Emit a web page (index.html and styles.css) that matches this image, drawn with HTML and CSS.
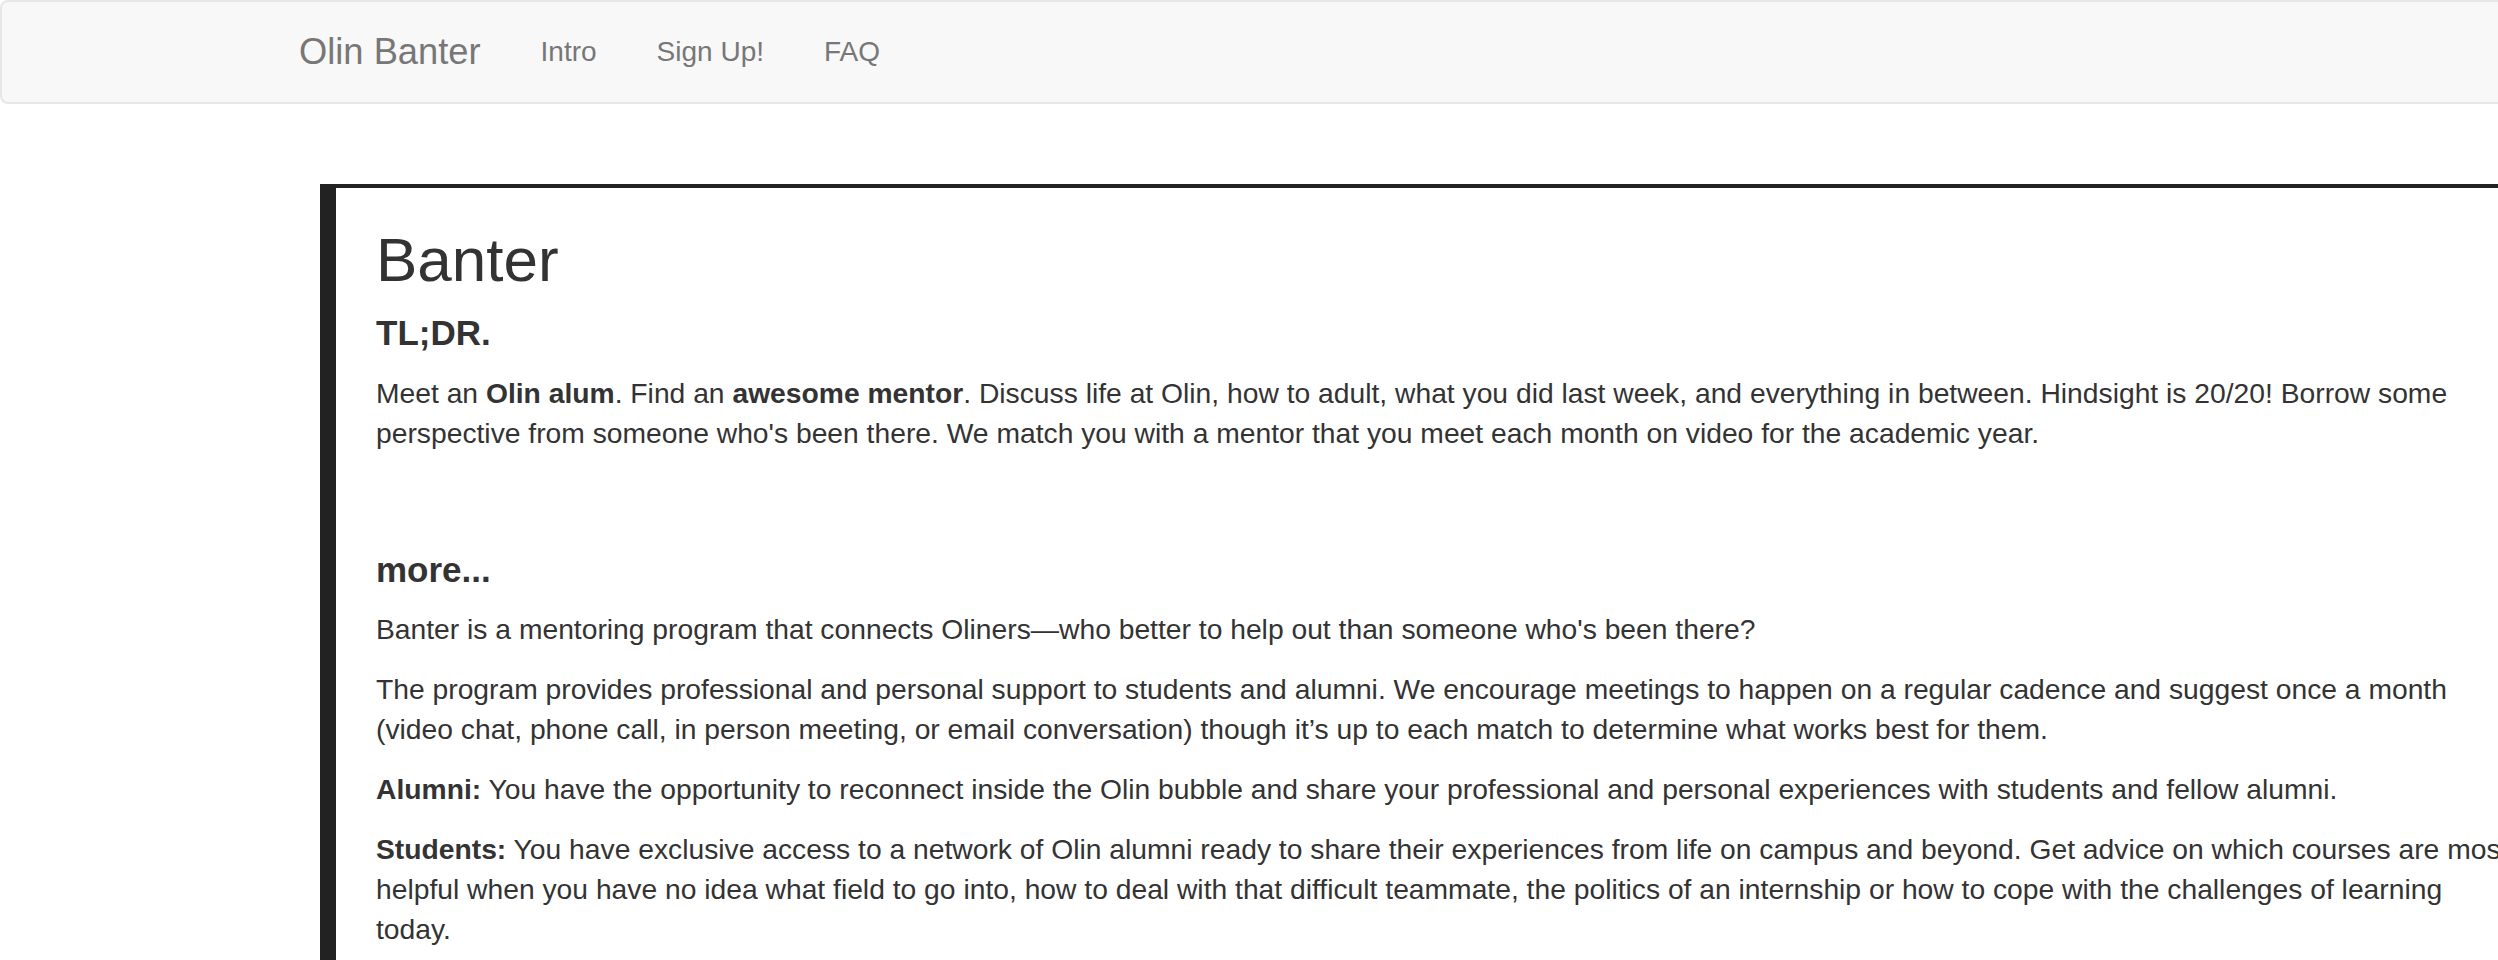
FILE: index.html
```html
<!DOCTYPE html>
<html lang="en">
<head>
<meta charset="utf-8">
<title>Olin Banter</title>
<link rel="stylesheet" href="styles.css">
</head>
<body>
<nav class="navbar">
  <div class="nav-inner">
    <a class="brand" href="#">Olin Banter</a>
    <ul class="nav-links">
      <li><a href="#">Intro</a></li>
      <li><a href="#">Sign Up!</a></li>
      <li><a href="#">FAQ</a></li>
    </ul>
  </div>
</nav>
<main class="intro">
  <h1 class="title">Banter</h1>
  <h4 class="sub">TL;DR.</h4>
  <p>Meet an <strong>Olin alum</strong>. Find an <strong>awesome mentor</strong>. Discuss life at Olin, how to adult, what you did last week, and everything in between. Hindsight is 20/20! Borrow some perspective from someone who's been there. We match you with a mentor that you meet each month on video for the academic year.</p>
  <br>
  <h4 class="sub more">more...</h4>
  <p>Banter is a mentoring program that connects Oliners—who better to help out than someone who's been there?</p>
  <p>The program provides professional and personal support to students and alumni. We encourage meetings to happen on a regular cadence and suggest once a month (video chat, phone call, in person meeting, or email conversation) though it’s up to each match to determine what works best for them.</p>
  <p><strong>Alumni:</strong> You have the opportunity to reconnect inside the Olin bubble and share your professional and personal experiences with students and fellow alumni.</p>
  <p><strong>Students:</strong> You have exclusive access to a network of Olin alumni ready to share their experiences from life on campus and beyond. Get advice on which courses are most helpful when you have no idea what field to go into, how to deal with that difficult teammate, the politics of an internship or how to cope with the challenges of learning today.</p>
</main>
</body>
</html>
```
FILE: styles.css
```css
html, body {
  margin: 0;
  padding: 0;
  overflow: hidden;
}
body {
  font-family: "Liberation Sans", Arial, Helvetica, sans-serif;
  font-size: 28.25px;
  line-height: 40px;
  color: #333;
  background: #fff;
}
.navbar {
  height: 100px;
  background: #f8f8f8;
  border: 2px solid #e7e7e7;
  border-right: none;
  border-radius: 8px 0 0 8px;
  margin-bottom: 80px;
}
.nav-inner {
  display: flex;
  align-items: flex-start;
  padding-left: 267px;
}
.brand {
  display: block;
  padding: 30px;
  font-size: 36.3px;
  line-height: 40px;
  color: #777;
  text-decoration: none;
}
.nav-links {
  display: flex;
  list-style: none;
  margin: 0;
  padding: 0;
}
.nav-links a {
  display: block;
  padding: 30px;
  font-size: 28px;
  line-height: 40px;
  color: #777;
  text-decoration: none;
}
.intro {
  margin-left: 320px;
  width: 2139px;
  border-top: 4px solid #222;
  border-left: 16px solid #222;
  padding: 0 0 40px 40px;
}
.title {
  font-size: 62px;
  font-weight: normal;
  line-height: 1.1;
  margin: 38px 0 20px;
}
.sub {
  font-size: 35px;
  font-weight: bold;
  line-height: 1.1;
  margin: 20px 0;
}
.sub.more {
  margin-top: 38px;
}
p {
  margin: 0 0 20px;
}
strong {
  font-weight: bold;
}
```
